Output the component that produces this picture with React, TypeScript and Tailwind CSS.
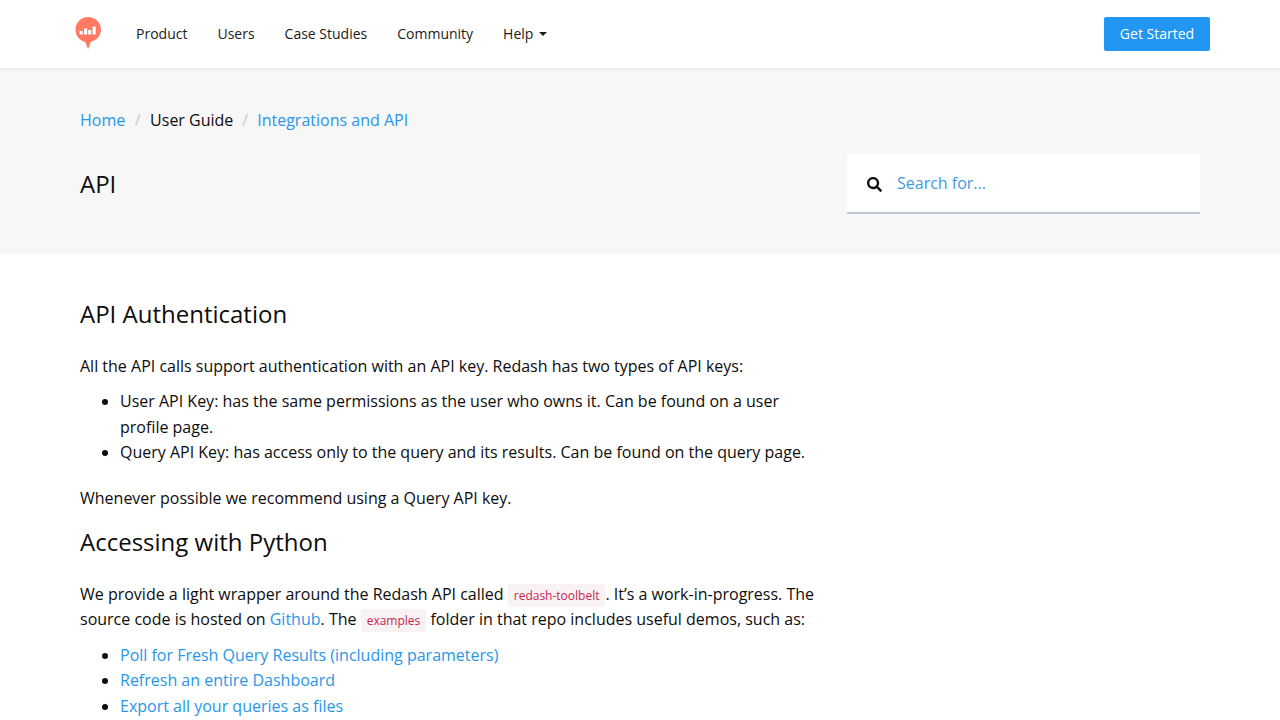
import React from "react";
import { FaSearch } from "react-icons/fa";

const navLinks = ["Product", "Users", "Case Studies", "Community"];

function Logo() {
  return (
    <svg width="26" height="32" viewBox="0 0 26 32" className="block">
      <path
        d="M13 0C5.800 0 .5 5.600 .5 12.600 .5 18.800 4.400 23.800 10.300 24.900L12.800 31.500C12.900 31.900 13.300 31.900 13.400 31.500L15.800 24.800C21.700 23.700 26 18.700 26 12.600 26 5.600 20.200 0 13 0Z"
        fill="#ff7964"
      />
      <g fill="#fff">
        <rect x="4.500" y="14" width="3.200" height="3.500" />
        <rect x="9" y="11.500" width="3.200" height="6" />
        <rect x="13.200" y="13" width="3" height="4.500" />
        <rect x="17.500" y="9.500" width="3.200" height="8" />
      </g>
    </svg>
  );
}

function Code({ children }: { children: React.ReactNode }) {
  return (
    <code className="rounded-[3px] bg-[#f9f2f4] px-[6px] py-[3px] font-['Open_Sans',sans-serif] text-[12px] leading-none text-[#c7254e]">
      {children}
    </code>
  );
}

function A({ children }: { children: React.ReactNode }) {
  return <a className="text-[#2a96e8]">{children}</a>;
}

export default function App() {
  return (
    <div className="h-[720px] overflow-hidden bg-white font-['Open_Sans',sans-serif] text-[16px] text-[#0d0d0d]">
      <header className="relative z-10 flex h-[68px] items-center bg-white pl-[75px] pr-[70px] shadow-[0_1px_4px_rgba(0,0,0,0.08)]">
        <div className="mb-[2px]">
          <Logo />
        </div>
        <nav className="mb-[2px] ml-[35px] flex items-center gap-[30px] text-[14px] text-[#1b1b1b]">
          {navLinks.map((l) => (
            <span key={l}>{l}</span>
          ))}
          <span className="flex items-center">
            Help
            <span className="ml-[6px] mt-[1px] border-x-[4px] border-t-[4px] border-x-transparent border-t-[#1b1b1b]" />
          </span>
        </nav>
        <button className="ml-auto h-[34px] w-[106px] rounded-[2px] bg-[#2196f3] pb-[2px] text-[14px] text-white">
          Get Started
        </button>
      </header>

      <section className="flex h-[186px] justify-between bg-[#f7f7f8] pl-[80px] pr-[80px]">
        <div>
          <div className="mt-[39px] flex h-[26px] items-center text-[16px]">
            <A>Home</A>
            <span className="mx-[9.500px] text-[#ccc]">/</span>
            <span>User Guide</span>
            <span className="mx-[9px] text-[#ccc]">/</span>
            <A>Integrations and API</A>
          </div>
          <h1 className="mt-[35px] text-[24px] leading-[32px] font-normal">API</h1>
        </div>
        <div className="mt-[86px] flex h-[60px] w-[353px] items-center rounded-t-[2px] border-b-2 border-[#bfc8d0] bg-white pl-[20px]">
          <FaSearch className="mt-[2px] h-[15px] w-[15px] text-[#111]" />
          <span className="ml-[15px] text-[16px] text-[#3f9ae0]">Search for...</span>
        </div>
      </section>

      <main className="w-[830px] pl-[80px]">
        <h2 className="mt-[43px] text-[24px] leading-[34px] font-normal">API Authentication</h2>
        <p className="mt-[23px] leading-[25.600px]">
          All the API calls support authentication with an API key. Redash has two types of API keys:
        </p>
        <ul className="mt-[9.400px] list-disc pl-[40px] leading-[25.600px]">
          <li>User API Key: has the same permissions as the user who owns it. Can be found on a user profile page.</li>
          <li>Query API Key: has access only to the query and its results. Can be found on the query page.</li>
        </ul>
        <p className="mt-[20px] leading-[25.600px]">Whenever possible we recommend using a Query API key.</p>
        <h2 className="mt-[13.500px] text-[24px] leading-[34px] font-normal">Accessing with Python</h2>
        <p className="mt-[23px] leading-[25.600px]">
          We provide a light wrapper around the Redash API called <Code>redash-toolbelt</Code>. It’s a work-in-progress. The source code is hosted on <A>Github</A>. The <Code>examples</Code> folder in that repo includes useful demos, such as:
        </p>
        <ul className="mt-[9.500px] list-disc pl-[40px] leading-[25.600px] marker:text-[#0d0d0d]">
          <li><A>Poll for Fresh Query Results (including parameters)</A></li>
          <li><A>Refresh an entire Dashboard</A></li>
          <li><A>Export all your queries as files</A></li>
        </ul>
      </main>
    </div>
  );
}
